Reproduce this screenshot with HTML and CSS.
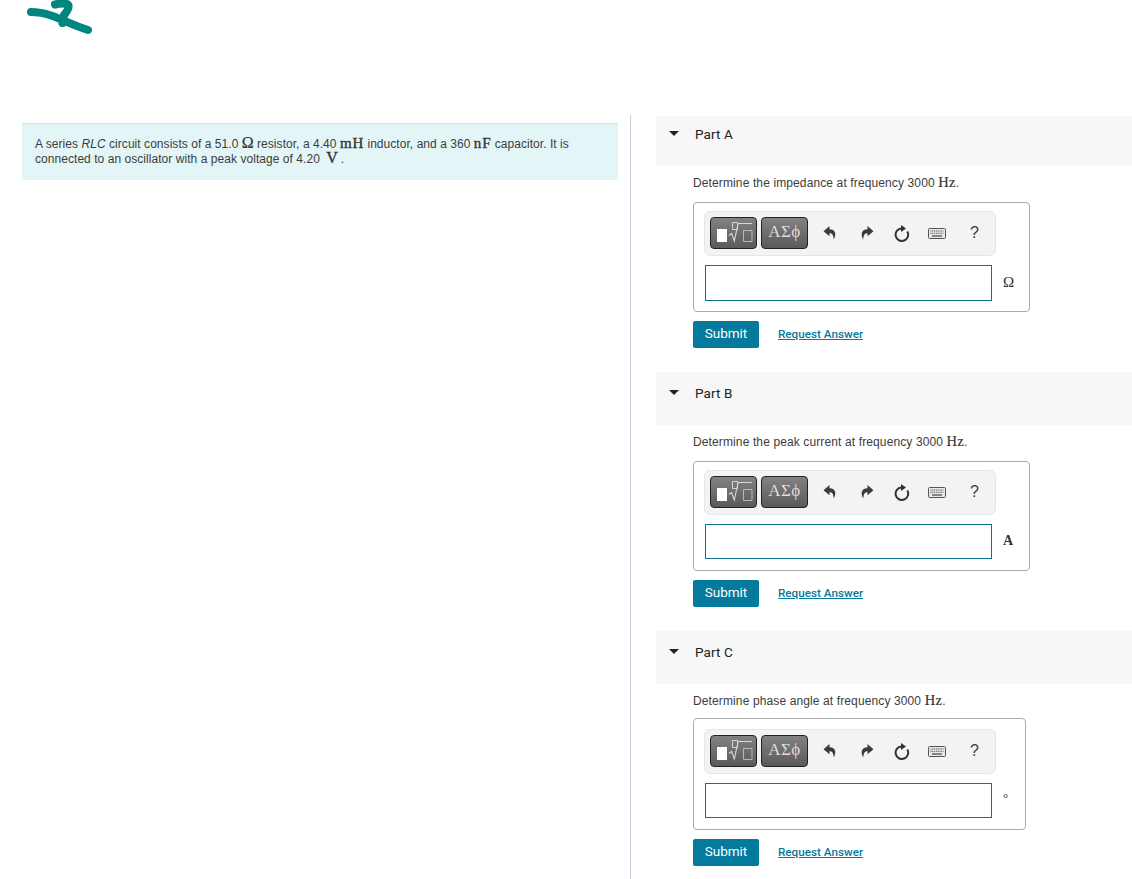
FILE: index.html
```html
<!DOCTYPE html>
<html lang="en">
<head>
<meta charset="utf-8">
<title>Series RLC circuit</title>
<link rel="stylesheet" href="styles.css">
</head>
<body>
<svg width="0" height="0" class="defs" aria-hidden="true">
  <defs>
    <symbol id="tpl" viewBox="1 1 45 30">
      <path d="M7 12H17V25H7Z" fill="#fff"/>
      <path d="M22.500 5.500h5v7h-5z" fill="none" stroke="#d4d4d4" stroke-width="1"/>
      <path d="M19 18.500l2.700-2 2.600 7.500 3.800-17.500H42" fill="none" stroke="#d8d8d8" stroke-width="1.100"/>
      <path d="M33.500 13.500h8.500v11h-8.500z" fill="none" stroke="#b8b8b8" stroke-width="1"/>
    </symbol>
    <symbol id="undo" viewBox="0 0 14 16">
      <path d="M6.500 1 .5 6.300l6 5V8.200c2.700 0 3.900 1.500 4.300 6.300 2.400-4.500 2.500-10-4.300-10.200z" fill="#3b3b3b"/>
    </symbol>
    <symbol id="redo" viewBox="0 0 14 16">
      <path d="M7.500 1l6 5.300-6 5V8.200c-2.700 0-3.900 1.500-4.300 6.300C.8 10 .7 4.500 7.500 4.300z" fill="#3b3b3b"/>
    </symbol>
    <symbol id="reset" viewBox="0 0 16 18">
      <path d="M13.300 7.500A6.300 6.300 0 1 1 7.500 4.400" fill="none" stroke="#333" stroke-width="2"/>
      <path d="M7 1l5 3.500-5 3.500z" fill="#333"/>
    </symbol>
    <symbol id="keys" viewBox="0 0 18 11">
      <rect x=".5" y=".5" width="17" height="10" rx="1" fill="#e8e8e8" stroke="#555"/>
      <path d="M2.500 3h13M2.500 5.200h13" stroke="#444" stroke-width="1.100" stroke-dasharray="1 .8"/>
      <path d="M4 8h10" stroke="#444" stroke-width="1.200"/>
    </symbol>
  </defs>
</svg>

<header class="logo-row">
  <svg class="logo" width="70" height="36" viewBox="0 0 70 36" aria-label="Logo">
    <path d="M5 12c7 0 14 1.500 20 3.500 9 3 23 10 37 14.500M29 4.500c4-1 10-1.200 13 0 2.500 3-2 8-4 10.500-.5 3-1 6-1.500 8" fill="none" stroke="#00857f" stroke-width="8" stroke-linecap="round" stroke-linejoin="round"/>
  </svg>
</header>

<main class="layout">
  <section class="intro-col">
    <div class="intro">
      A series <i>RLC</i> circuit consists of a 51.0 <span class="math om">&#937;</span> resistor, a 4.40 <span class="math">mH</span> inductor, and a 360 <span class="math">nF</span> capacitor. It is<br>connected to an oscillator with a peak voltage of 4.20 <span class="math volt">V</span>.
    </div>
  </section>

  <section class="parts-col">
    <article class="part part--first">
      <div class="part-head"><span class="caret"></span><h2>Part A</h2></div>
      <p class="prompt">Determine the impedance at frequency 3000 <span class="math hz">Hz</span>.</p>
      <div class="answer">
        <div class="toolbar">
          <button class="tb tb-tpl"><svg width="45" height="30"><use href="#tpl"/></svg></button>
          <button class="tb tb-greek">ΑΣϕ</button>
          <span class="tools">
            <svg class="i-undo" width="14" height="16"><use href="#undo"/></svg>
            <svg class="i-redo" width="14" height="16"><use href="#redo"/></svg>
            <svg class="i-reset" width="16" height="18"><use href="#reset"/></svg>
            <svg class="i-keys" width="18" height="11"><use href="#keys"/></svg>
            <span class="help">?</span>
          </span>
        </div>
        <div class="entry"><input class="field" type="text" aria-label="Answer"><span class="unit">Ω</span></div>
      </div>
      <div class="actions"><button class="submit">Submit</button><a class="reveal" href="#">Request Answer</a></div>
    </article>

    <article class="part part--second">
      <div class="part-head"><span class="caret"></span><h2>Part B</h2></div>
      <p class="prompt">Determine the peak current at frequency 3000 <span class="math hz">Hz</span>.</p>
      <div class="answer">
        <div class="toolbar">
          <button class="tb tb-tpl"><svg width="45" height="30"><use href="#tpl"/></svg></button>
          <button class="tb tb-greek">ΑΣϕ</button>
          <span class="tools">
            <svg class="i-undo" width="14" height="16"><use href="#undo"/></svg>
            <svg class="i-redo" width="14" height="16"><use href="#redo"/></svg>
            <svg class="i-reset" width="16" height="18"><use href="#reset"/></svg>
            <svg class="i-keys" width="18" height="11"><use href="#keys"/></svg>
            <span class="help">?</span>
          </span>
        </div>
        <div class="entry"><input class="field" type="text" aria-label="Answer"><span class="unit unit--bold">A</span></div>
      </div>
      <div class="actions"><button class="submit">Submit</button><a class="reveal" href="#">Request Answer</a></div>
    </article>

    <article class="part part--third">
      <div class="part-head"><span class="caret"></span><h2>Part C</h2></div>
      <p class="prompt">Determine phase angle at frequency 3000 <span class="math hz">Hz</span>.</p>
      <div class="answer">
        <div class="toolbar">
          <button class="tb tb-tpl"><svg width="45" height="30"><use href="#tpl"/></svg></button>
          <button class="tb tb-greek">ΑΣϕ</button>
          <span class="tools">
            <svg class="i-undo" width="14" height="16"><use href="#undo"/></svg>
            <svg class="i-redo" width="14" height="16"><use href="#redo"/></svg>
            <svg class="i-reset" width="16" height="18"><use href="#reset"/></svg>
            <svg class="i-keys" width="18" height="11"><use href="#keys"/></svg>
            <span class="help">?</span>
          </span>
        </div>
        <div class="entry"><input class="field" type="text" aria-label="Answer"><span class="unit unit--deg">°</span></div>
      </div>
      <div class="actions"><button class="submit">Submit</button><a class="reveal" href="#">Request Answer</a></div>
    </article>
  </section>
</main>
</body>
</html>
```
FILE: styles.css
```css
* { box-sizing: border-box; }
html, body { margin: 0; padding: 0; height: 879px; overflow: hidden; background: #fff; }
body { font-family: "Liberation Sans", Arial, sans-serif; color: #333; font-size: 12px; }
.defs { display: block; height: 0; }

.logo-row { height: 115px; padding: 0 0 0 26px; }
.logo { display: block; }

.layout { display: flex; height: 764px; }
.intro-col { width: 631px; padding: 8px 12px 0 22px; border-right: 1px solid #c3d1de; }
.intro {
  width: 596px;
  height: 57px;
  padding: 13px 12px 0 13px;
  background: #e4f5f7;
  border-top: 1px solid #dde3e5;
  line-height: 15px;
  font-size: 12px;
  letter-spacing: .05px;
  color: #3c3c3c;
}
.math { font-family: "Liberation Serif", "DejaVu Serif", serif; font-weight: 400; font-size: 15px; line-height: 1px; color: #333; letter-spacing: .8px; -webkit-text-stroke: .35px #333; }
.om { font-size: 16px; letter-spacing: 0; -webkit-text-stroke: .2px #333; }
.volt { font-size: 16px; margin-left: 3px; margin-right: 2px; }
.hz { font-size: 14.500px; letter-spacing: .3px; -webkit-text-stroke: .15px #333; }

.parts-col { flex: 1; padding: 1px 0 0 25px; font-family: "Liberation Sans", sans-serif; }
.part { height: 259px; }
.part--first { height: 256px; }
.part-head { display: flex; align-items: flex-start; height: 53px; background: #f7f7f7; padding: 14px 0 0 13px; }
.part--first .part-head { height: 49px; padding-top: 11px; }
.part-head h2 { margin: 0 0 0 16px; font-family: Roboto, sans-serif; font-size: 13.500px; line-height: 15px; font-weight: 400; letter-spacing: .1px; color: #222; }
.caret { width: 0; height: 0; margin-top: 4px; border: 5px solid transparent; border-top: 5px solid #222; border-bottom: 0; }
.prompt { margin: 0; padding: 9px 0 0 37px; height: 36px; font-size: 12px; line-height: 16px; letter-spacing: .12px; color: #3c3c3c; }
.part--first .prompt { padding-top: 10px; height: 37px; }
.part--third .prompt { height: 34px; }

.answer { width: 337px; height: 110px; margin-left: 37px; border: 1px solid #aaa; border-radius: 4px; padding: 8px 10px 9px; background: #fff; }
.part--third .answer { width: 333px; height: 112px; padding-top: 10px; }
.toolbar { display: flex; align-items: center; width: 292px; height: 45px; background: #f3f3f3; border: 1px solid #e6e6e6; border-radius: 6px; padding: 0 0 0 5px; gap: 4px; }
.tb { width: 47px; height: 32px; margin-bottom: 2px; padding: 0; border: 1px solid #222; border-radius: 4px; background: linear-gradient(#828282, #5a5a5a); color: #ddd; display: block; }
.tb svg { display: block; }
.tb-greek { font-family: "Liberation Serif", serif; font-size: 17px; letter-spacing: .4px; padding-bottom: 2px; }
.tools { display: flex; align-items: center; margin: 0 0 2px 11px; }
.i-undo { margin-right: 23px; }
.i-redo { margin-right: 20px; }
.i-reset { margin-right: 18px; }
.i-keys { margin-right: 24px; margin-top: 2px; }
.help { font-size: 16px; line-height: 18px; color: #3a3a3a; }
.entry { display: flex; align-items: center; margin-top: 9px; padding-left: 1px; }
.field { width: 287px; height: 35px; border: 1px solid #0f7391; border-radius: 0; background: #fff; padding: 0; outline: none; }
.part--first .field { height: 36px; }
.unit { margin: 0 0 2px 11px; font-family: "Liberation Serif", serif; font-size: 15px; color: #333; width: 12px; }
.unit--bold { font-weight: 700; font-size: 14px; }
.unit--deg { margin-bottom: 6px; font-size: 13px; }

.actions { display: flex; align-items: center; margin: 9px 0 0 37px; }
.submit { width: 66px; height: 27px; padding: 0 0 3px; border: 0; border-radius: 2px; background: #047a9c; color: #fff; font-family: Roboto, "Liberation Sans", sans-serif; font-size: 13.500px; font-weight: 400; }
.reveal { margin: 0 0 2px 19px; font-family: Roboto, sans-serif; font-size: 11.700px; font-weight: 500; color: #047a9c; text-decoration: underline; }
```
